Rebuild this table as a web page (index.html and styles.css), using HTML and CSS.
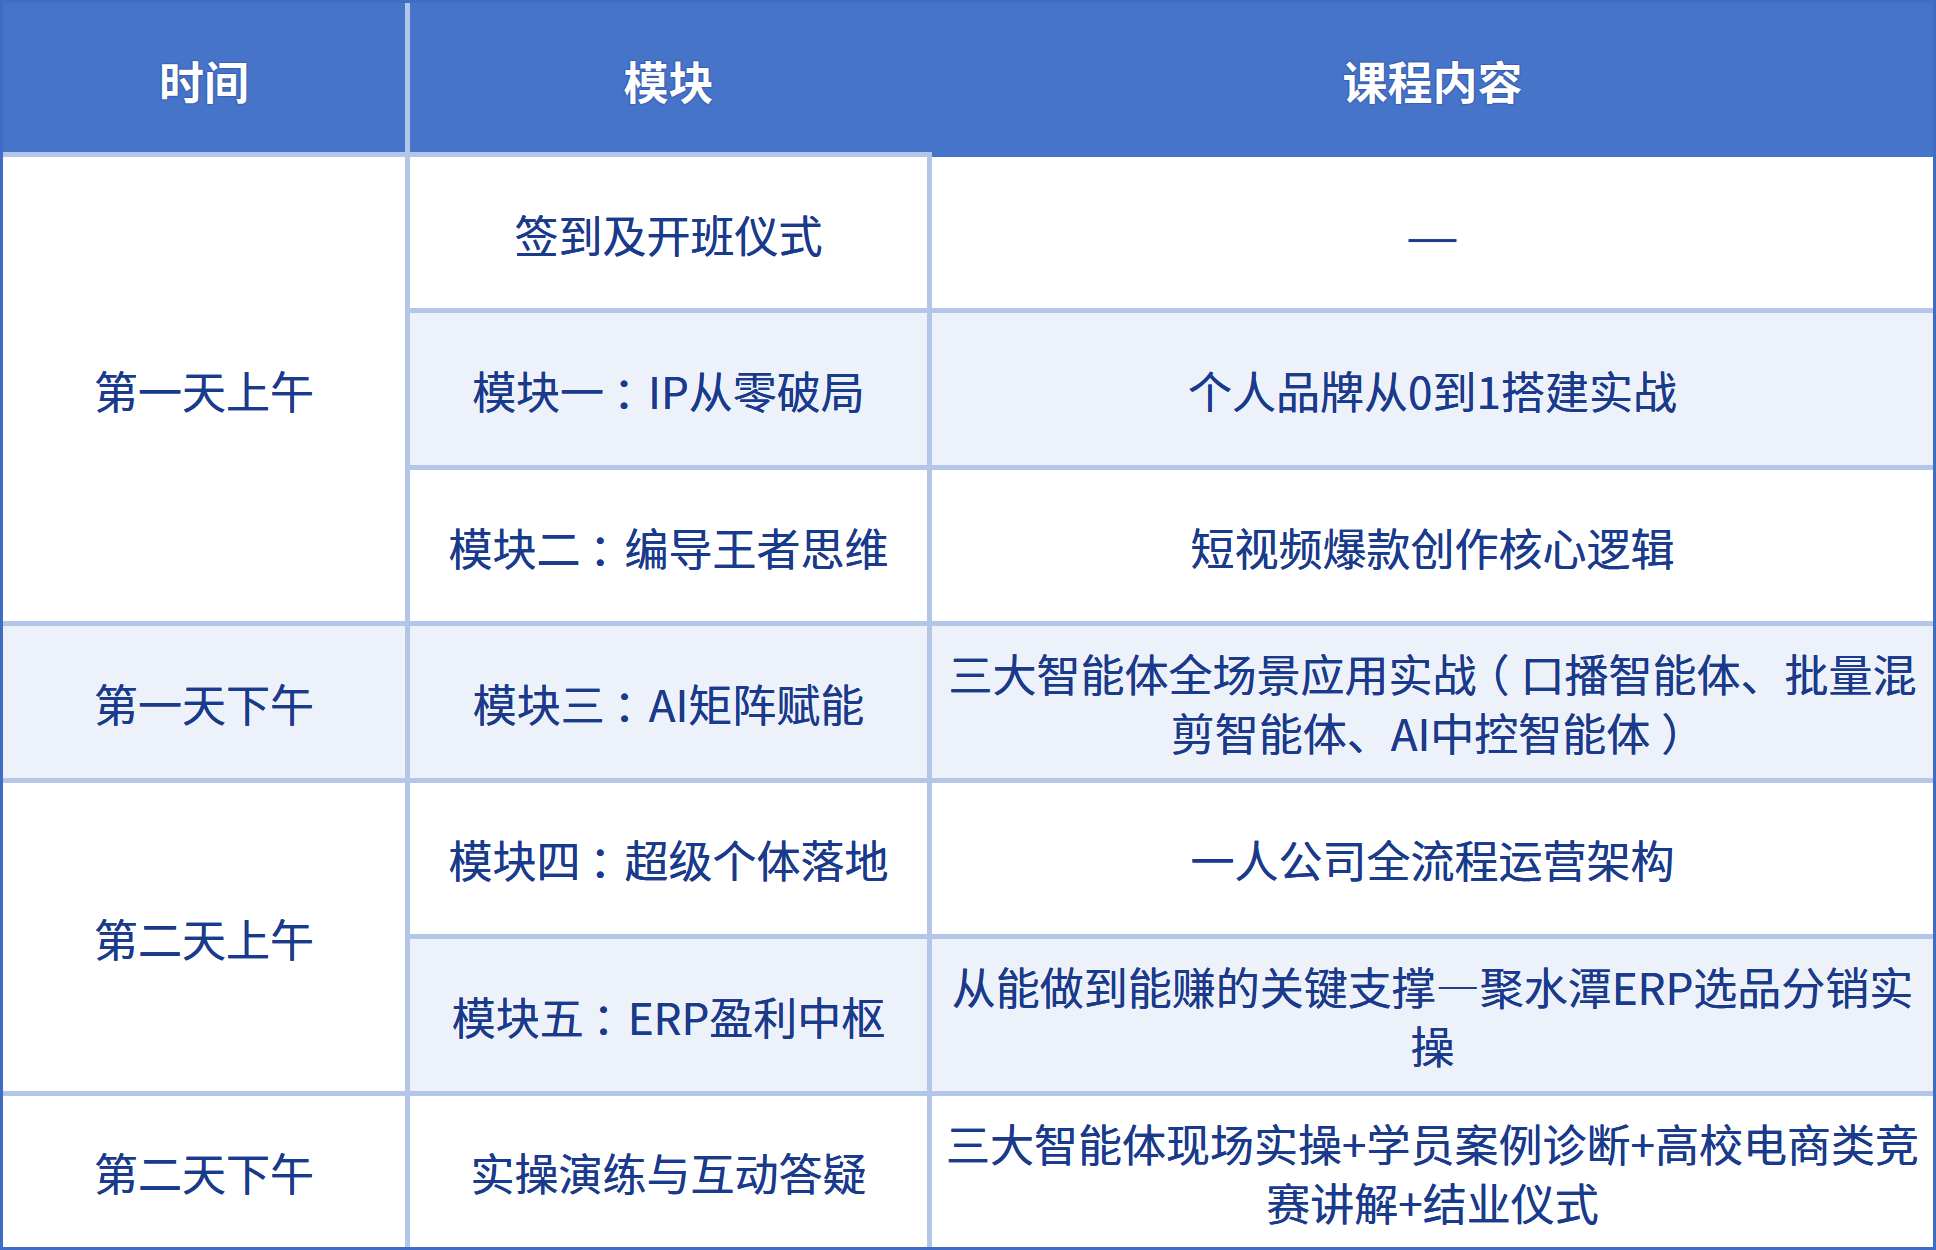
FILE: index.html
```html
<!DOCTYPE html>
<html lang="zh-CN">
<head>
<meta charset="utf-8">
<title>课程安排</title>
<link rel="stylesheet" href="styles.css">
</head>
<body>
<div class="schedule">
  <div class="cell head"><span class="t">时间</span></div>
  <div class="cell head head-mid"><span class="t">模块</span></div>
  <div class="cell head head-last"><span class="t">课程内容</span></div>

  <div class="cell span3"><span class="t">第一天上午</span></div>
  <div class="cell"><span class="t">签到及开班仪式</span></div>
  <div class="cell"><span class="t"><span class="dash">—</span></span></div>

  <div class="cell alt"><span class="t">模块一<span class="pc colon">：</span>IP从零破局</span></div>
  <div class="cell alt"><span class="t">个人品牌从0到1搭建实战</span></div>

  <div class="cell"><span class="t">模块二<span class="pc colon">：</span>编导王者思维</span></div>
  <div class="cell"><span class="t">短视频爆款创作核心逻辑</span></div>

  <div class="cell alt"><span class="t">第一天下午</span></div>
  <div class="cell alt"><span class="t">模块三<span class="pc colon">：</span>AI矩阵赋能</span></div>
  <div class="cell alt"><span class="t">三大智能体全场景应用实战<span class="pc">（</span>口播智能体、批量混<br>剪智能体、AI中控智能体<span class="pc">）</span></span></div>

  <div class="cell span2"><span class="t">第二天上午</span></div>
  <div class="cell"><span class="t">模块四<span class="pc colon">：</span>超级个体落地</span></div>
  <div class="cell"><span class="t">一人公司全流程运营架构</span></div>

  <div class="cell alt"><span class="t">模块五<span class="pc colon">：</span>ERP盈利中枢</span></div>
  <div class="cell alt"><span class="t">从能做到能赚的关键支撑—聚水潭ERP选品分销实<br>操</span></div>

  <div class="cell"><span class="t">第二天下午</span></div>
  <div class="cell"><span class="t">实操演练与互动答疑</span></div>
  <div class="cell"><span class="t">三大智能体现场实操+学员案例诊断+高校电商类竞<br>赛讲解+结业仪式</span></div>
</div>
</body>
</html>
```

FILE: styles.css
```css
html, body {
  margin: 0;
  padding: 0;
  background: #ffffff;
}

.schedule {
  box-sizing: border-box;
  width: 1936px;
  height: 1250px;
  border: 3px solid #3f6cc4;
  background: #b4c6e7;
  display: grid;
  grid-template-columns: 402px 517px 1001px;
  grid-template-rows: 149px repeat(7, minmax(0, 1fr));
  gap: 5px;
  font-family: "Noto Sans CJK SC", "Noto Sans", sans-serif;
}

.cell {
  display: flex;
  align-items: center;
  justify-content: center;
  text-align: center;
  background: #ffffff;
  color: #1a3a8c;
  font-size: 44px;
  line-height: 59px;
  padding: 3px 4px 0;
  box-sizing: border-box;
  text-shadow: 0 0 0.6px #1a3a8c, 0 0 2px rgba(255, 255, 255, 0.9);
}

.t {
  display: block;
  white-space: nowrap;
}

/* full-width punctuation centred in its em box: half-width glyph + padding */
.pc {
  font-feature-settings: "halt" 1;
  padding: 0 0.25em;
}

.pc.colon {
  padding: 0 0.3em 0 0.2em;
}

.dash {
  display: inline-block;
  transform: scaleX(1.35);
}

.alt {
  background: #edf1f9;
}

.head {
  background: #4674c8;
  color: #ffffff;
  font-weight: 700;
  font-size: 45px;
  padding-top: 6px;
  text-shadow: 0 0 2px #1f3f93, 0 0 1px #1f3f93;
}

.head-mid {
  box-shadow: 5px 0 0 #4674c8;
}

.head-last {
  box-shadow: 0 5px 0 #4674c8;
}

.span3 {
  grid-row: span 3;
}

.span2 {
  grid-row: span 2;
}
```
